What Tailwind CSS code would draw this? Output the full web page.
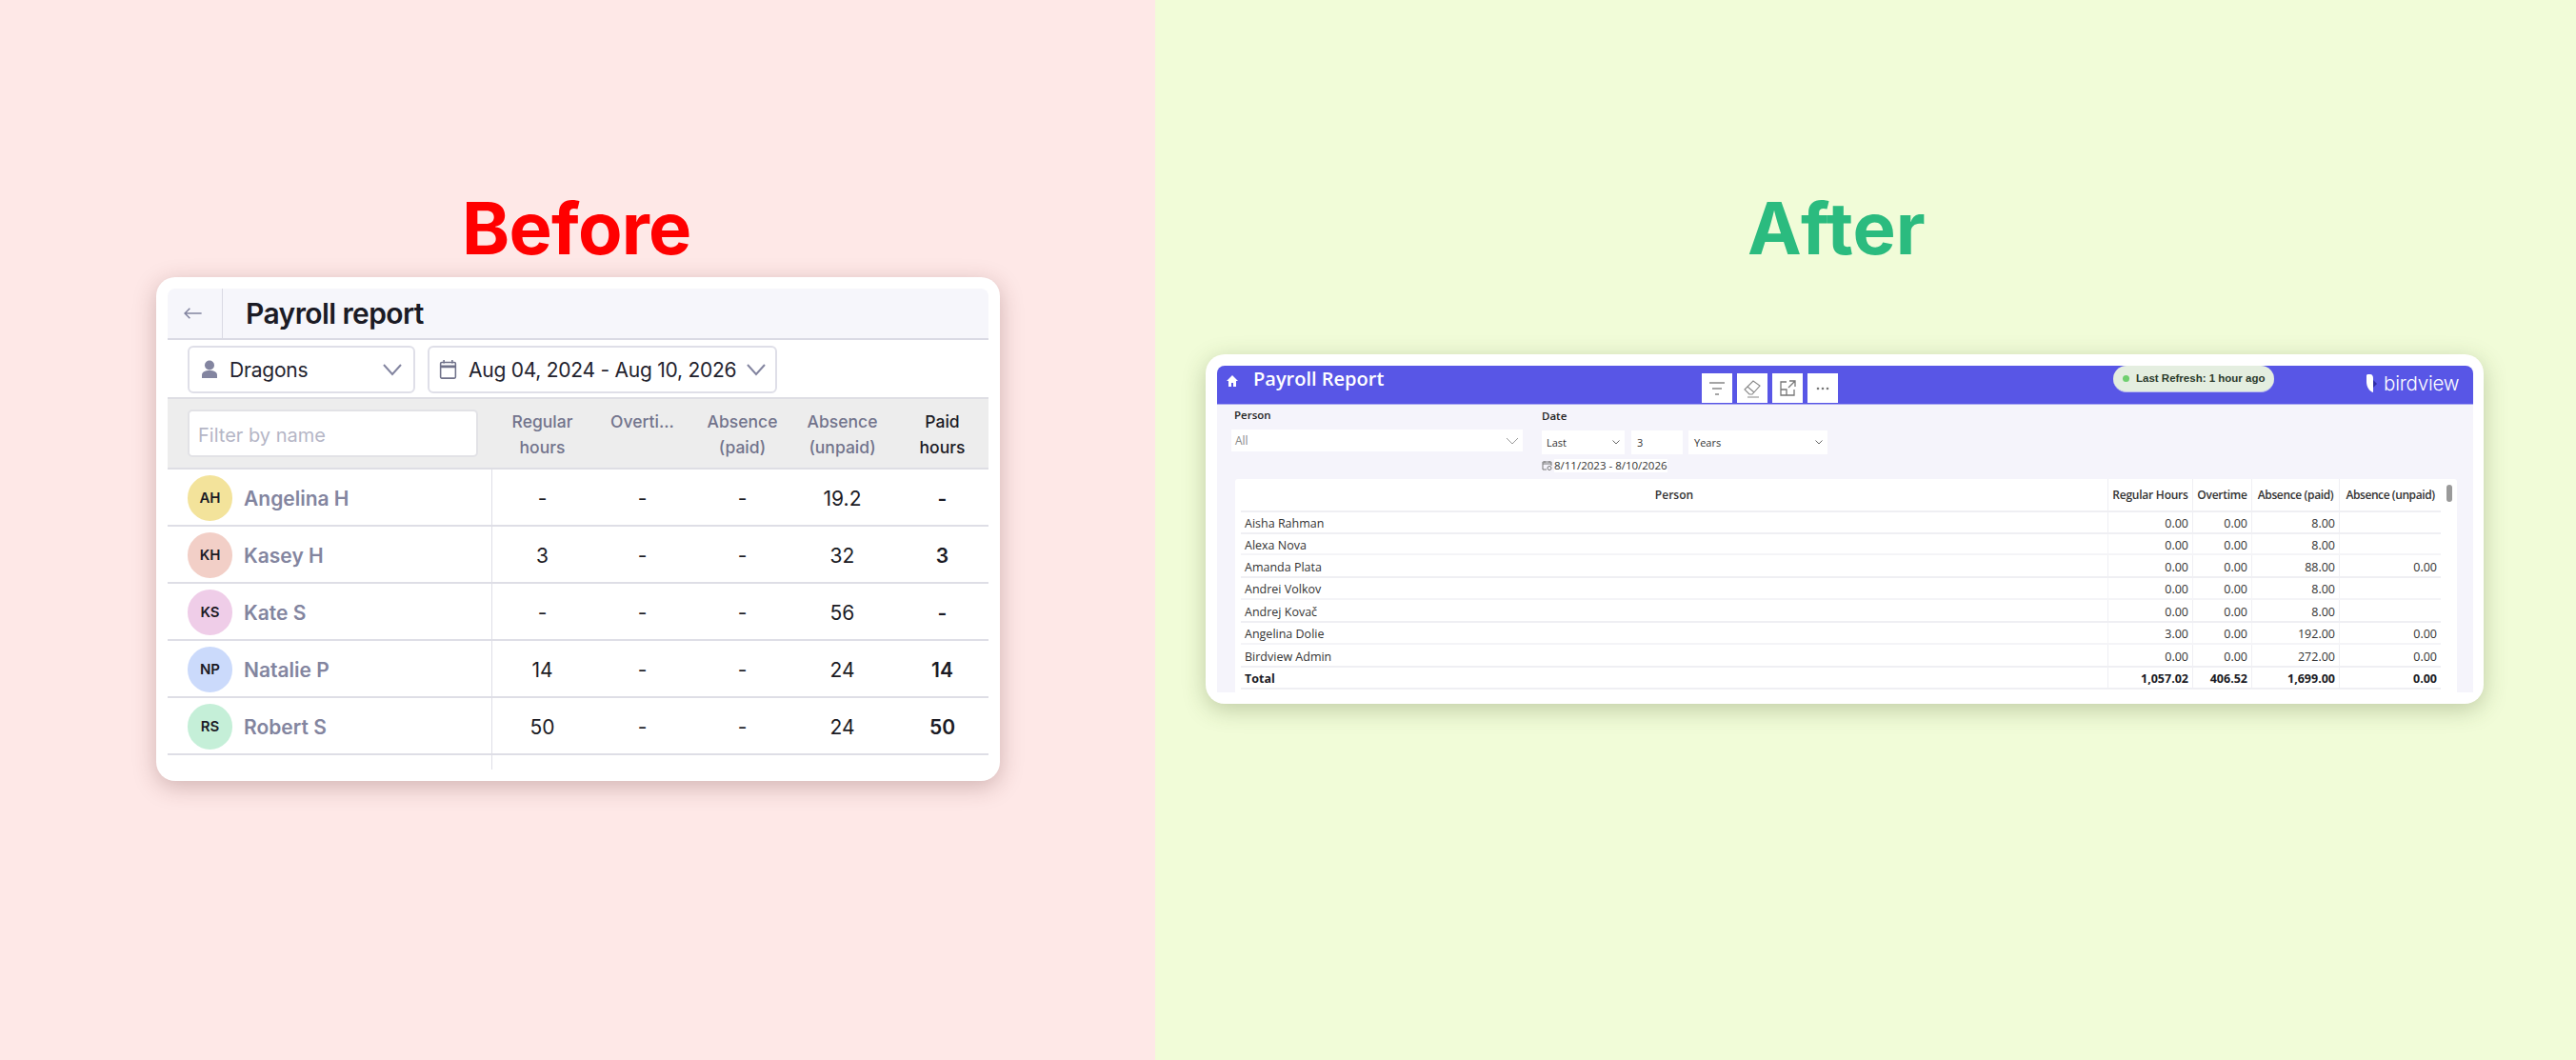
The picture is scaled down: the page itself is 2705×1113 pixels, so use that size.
<!DOCTYPE html>
<html><head><meta charset="utf-8"><script src="https://cdn.jsdelivr.net/npm/@tailwindcss/browser@4"></script></head>
<body class="m-0 overflow-hidden">
<div class="flex w-[2705px] h-[1113px] font-['Inter',sans-serif]">
  <!-- BEFORE -->
  <section class="w-[1213px] bg-[#FEE8E7] flex flex-col pt-[198px]">
    <h2 class="h-[83px] ml-[485px] text-[76px] leading-[83px] font-bold text-[#FF0000] tracking-[-0.01em]">Before</h2>
    <div class="ml-[164px] mt-[10px] w-[886px] h-[529px] bg-white rounded-[20px] shadow-[0_6px_24px_rgba(90,40,40,0.28)] px-[12px] pt-[12px] pb-[12px]">
      <div class="w-[862px] h-[505px] overflow-hidden rounded-t-[8px]">
        <div class="h-[54px] bg-[#F6F6FB] border-b-2 border-[#DADAE4] flex items-center">
          <div class="w-[58px] h-full border-r border-[#DADAE4] flex items-center justify-center pr-[6px]">
            <svg class="w-[22px] h-[14px]" viewBox="0 0 24 16" fill="none" stroke="#8385A0" stroke-width="1.8"><path d="M23 8H3M9 2 3 8l6 6"/></svg>
          </div>
          <div class="ml-[24px] text-[30px] font-semibold text-[#1B1B25] tracking-[-0.02em]">Payroll report</div>
        </div>
        <div class="h-[60px] flex items-center pl-[21px] gap-[13px] pt-[1px]">
          <div class="w-[239px] h-[50px] border-2 border-[#DFDFE8] rounded-[6px] flex items-center pl-[12px] pr-[12px]">
            <svg class="w-[18px] h-[19px]" viewBox="0 0 18 19" fill="#8385A0"><circle cx="9" cy="5.5" r="5"/><path d="M1 19v-3c0-3.500 3-5 8-5s8 1.500 8 5v3z"/></svg>
            <span class="ml-[12px] mt-[2px] text-[21px] text-[#23232E] tracking-[-0.01em]">Dragons</span>
            <svg class="w-[20px] h-[14px] ml-auto" viewBox="0 0 20 14" fill="none" stroke="#8385A0" stroke-width="2"><path d="m1 2 9 10 9-10"/></svg>
          </div>
          <div class="w-[367px] h-[50px] border-2 border-[#DFDFE8] rounded-[6px] flex items-center pl-[10px] pr-[10px]">
            <svg class="w-[19px] h-[21px]" viewBox="0 0 20 24" fill="none" stroke="#70728A" stroke-width="1.800"><rect x="1" y="4" width="18" height="19" rx="1.500"/><path d="M1 9h18" stroke-width="3"/><path d="M5 1v4M15 1v4"/></svg>
            <span class="ml-[12px] mt-[2px] text-[21px] text-[#23232E] tracking-[-0.012em] whitespace-nowrap">Aug 04, 2024 - Aug 10, 2026</span>
            <svg class="w-[20px] h-[14px] ml-auto" viewBox="0 0 20 14" fill="none" stroke="#8385A0" stroke-width="2"><path d="m1 2 9 10 9-10"/></svg>
          </div>
        </div>
        <div class="grid grid-cols-[341px_105px_105px_105px_105px_105px] h-[76px] bg-[#EDEDED] border-y-2 border-[#DEDEE4] text-[17.5px] leading-[27px] font-medium text-[#72748C] text-center">
          <div class="flex items-center pl-[21px]"><div class="w-[305px] h-[50px] bg-white border-2 border-[#E2E2E6] rounded-[5px] flex items-center pl-[9px] pt-[4px] text-[20px] font-normal text-[#B5B6C6]">Filter by name</div></div>
          <div class="pt-[10px]">Regular<br>hours</div>
          <div class="pt-[10px]">Overti...</div>
          <div class="pt-[10px]">Absence<br>(paid)</div>
          <div class="pt-[10px]">Absence<br>(unpaid)</div>
          <div class="pt-[10px] text-[#1B1B25]">Paid<br>hours</div>
        </div>
        <div class="grid grid-cols-[341px_105px_105px_105px_105px_105px] auto-rows-[60px] text-center text-[21px] text-[#1B1B25] items-center">
          <div class="h-[60px] border-b-2 border-r border-[#DEDEE6] flex items-center pl-[21px] pt-[2px] text-left"><span class="w-[47px] h-[48px] rounded-full bg-[#F3E39B] flex items-center justify-center text-[15px] font-semibold text-[#1B1B25] shrink-0">AH</span><span class="ml-[12px] mt-[1px] font-semibold text-[#83859F]">Angelina H</span></div>
          <div class="h-[60px] border-b-2 border-[#DEDEE6] leading-[62px]">-</div><div class="h-[60px] border-b-2 border-[#DEDEE6] leading-[62px]">-</div><div class="h-[60px] border-b-2 border-[#DEDEE6] leading-[62px]">-</div><div class="h-[60px] border-b-2 border-[#DEDEE6] leading-[62px]">19.2</div><div class="h-[60px] border-b-2 border-[#DEDEE6] leading-[62px] font-semibold">-</div>
          <div class="h-[60px] border-b-2 border-r border-[#DEDEE6] flex items-center pl-[21px] pt-[2px] text-left"><span class="w-[47px] h-[48px] rounded-full bg-[#F2CFC7] flex items-center justify-center text-[15px] font-semibold text-[#1B1B25] shrink-0">KH</span><span class="ml-[12px] mt-[1px] font-semibold text-[#83859F]">Kasey H</span></div>
          <div class="h-[60px] border-b-2 border-[#DEDEE6] leading-[62px]">3</div><div class="h-[60px] border-b-2 border-[#DEDEE6] leading-[62px]">-</div><div class="h-[60px] border-b-2 border-[#DEDEE6] leading-[62px]">-</div><div class="h-[60px] border-b-2 border-[#DEDEE6] leading-[62px]">32</div><div class="h-[60px] border-b-2 border-[#DEDEE6] leading-[62px] font-semibold">3</div>
          <div class="h-[60px] border-b-2 border-r border-[#DEDEE6] flex items-center pl-[21px] pt-[2px] text-left"><span class="w-[47px] h-[48px] rounded-full bg-[#EFCDE8] flex items-center justify-center text-[15px] font-semibold text-[#1B1B25] shrink-0">KS</span><span class="ml-[12px] mt-[1px] font-semibold text-[#83859F]">Kate S</span></div>
          <div class="h-[60px] border-b-2 border-[#DEDEE6] leading-[62px]">-</div><div class="h-[60px] border-b-2 border-[#DEDEE6] leading-[62px]">-</div><div class="h-[60px] border-b-2 border-[#DEDEE6] leading-[62px]">-</div><div class="h-[60px] border-b-2 border-[#DEDEE6] leading-[62px]">56</div><div class="h-[60px] border-b-2 border-[#DEDEE6] leading-[62px] font-semibold">-</div>
          <div class="h-[60px] border-b-2 border-r border-[#DEDEE6] flex items-center pl-[21px] pt-[2px] text-left"><span class="w-[47px] h-[48px] rounded-full bg-[#CBDAFB] flex items-center justify-center text-[15px] font-semibold text-[#1B1B25] shrink-0">NP</span><span class="ml-[12px] mt-[1px] font-semibold text-[#83859F]">Natalie P</span></div>
          <div class="h-[60px] border-b-2 border-[#DEDEE6] leading-[62px]">14</div><div class="h-[60px] border-b-2 border-[#DEDEE6] leading-[62px]">-</div><div class="h-[60px] border-b-2 border-[#DEDEE6] leading-[62px]">-</div><div class="h-[60px] border-b-2 border-[#DEDEE6] leading-[62px]">24</div><div class="h-[60px] border-b-2 border-[#DEDEE6] leading-[62px] font-semibold">14</div>
          <div class="h-[60px] border-b-2 border-r border-[#DEDEE6] flex items-center pl-[21px] pt-[2px] text-left"><span class="w-[47px] h-[48px] rounded-full bg-[#C5EFD8] flex items-center justify-center text-[15px] font-semibold text-[#1B1B25] shrink-0">RS</span><span class="ml-[12px] mt-[1px] font-semibold text-[#83859F]">Robert S</span></div>
          <div class="h-[60px] border-b-2 border-[#DEDEE6] leading-[62px]">50</div><div class="h-[60px] border-b-2 border-[#DEDEE6] leading-[62px]">-</div><div class="h-[60px] border-b-2 border-[#DEDEE6] leading-[62px]">-</div><div class="h-[60px] border-b-2 border-[#DEDEE6] leading-[62px]">24</div><div class="h-[60px] border-b-2 border-[#DEDEE6] leading-[62px] font-semibold">50</div>
          <div class="h-[16px] self-start border-r border-[#DEDEE6]"></div>
        </div>
      </div>
    </div>
  </section>

  <!-- AFTER -->
  <section class="w-[1492px] bg-[#F1FCD8] flex flex-col pt-[198px]">
    <h2 class="h-[83px] ml-[622px] text-[76px] leading-[83px] font-bold text-[#2BBB7F] tracking-[0em]">After</h2>
    <div class="ml-[53px] mt-[91px] w-[1342px] h-[367px] bg-white rounded-[20px] shadow-[0_6px_24px_rgba(60,80,30,0.28)] pl-[12px] pr-[11px] pt-[12px] font-['Open_Sans',sans-serif]">
      <div class="relative w-[1319px] h-[343px] bg-[#F5F4FB] rounded-t-[8px] overflow-hidden">
        <header class="relative h-[41px] bg-[#5856E6] border-b border-[#A9A8F0] flex items-start">
          <svg class="w-[14px] h-[14px] ml-[9px] mt-[9px]" viewBox="0 0 14 14" fill="#fff"><path d="M7 1 1 7h2v6h3V9h2v4h3V7h2z"/></svg>
          <div class="ml-[15px] text-[20px] leading-[28px] font-semibold text-white">Payroll Report</div>
          <div class="absolute left-[509px] top-[8px] flex gap-[5px]">
            <div class="w-[32px] h-[31px] bg-white flex items-center justify-center"><svg class="w-[20px] h-[18px]" viewBox="0 0 20 18" fill="none" stroke="#888" stroke-width="1.300"><path d="M2 3h16M5 9h10M8 15h4"/></svg></div>
            <div class="w-[32px] h-[31px] bg-white flex items-center justify-center"><svg class="w-[22px] h-[20px]" viewBox="0 0 22 20" fill="none" stroke="#888" stroke-width="1.100"><path d="m3 11 9-9 7 5-8 9H8zM6 8l7 6M6 19h12"/></svg></div>
            <div class="w-[32px] h-[31px] bg-white flex items-center justify-center"><svg class="w-[20px] h-[20px]" viewBox="0 0 20 20" fill="none" stroke="#777" stroke-width="1.300"><path d="M9 3H3v14h14v-6M3 11h6v6M12 2h6v6M18 2l-7 7"/></svg></div>
            <div class="w-[32px] h-[31px] bg-white flex items-center justify-center"><svg class="w-[14px] h-[4px]" viewBox="0 0 14 4" fill="#777"><circle cx="2" cy="2" r="1.300"/><circle cx="7" cy="2" r="1.300"/><circle cx="12" cy="2" r="1.300"/></svg></div>
          </div>
          <div class="absolute left-[941px] top-0 w-[169px] h-[28px] rounded-full bg-[#E4EEE0] border-b border-[#B9B9F0] flex items-center pl-[10px] text-[11.500px] font-bold text-[#2B3A2B] font-['Liberation_Sans',sans-serif] whitespace-nowrap">
            <span class="w-[7px] h-[7px] rounded-full bg-[#6FCF6F] mr-[7px]"></span>Last Refresh: 1 hour ago
          </div>
          <div class="absolute left-[1206px] top-[8px] flex items-center">
            <svg class="w-[14px] h-[22px]" viewBox="0 0 14 22"><path d="M2 1h3c2 0 3 2 3 4v15C4 19 1 14 1 9V2z" fill="#fff"/><path d="m8 7 4 4-4 4z" fill="#2F2DA8"/></svg>
            <span class="ml-[5px] text-[20.5px] leading-[22px] font-light tracking-[-0.01em] text-white font-['Inter',sans-serif]">birdview</span>
          </div>
        </header>
        <div class="relative h-[78px] text-[#333]">
          <div class="absolute left-[18px] top-[3px] text-[11.500px] leading-[16px] font-semibold text-[#222]">Person</div>
          <div class="absolute left-[15px] top-[26px] w-[306px] h-[23px] bg-white flex items-center pl-[4px] text-[12px] text-[#888]">All
            <svg class="w-[14px] h-[8px] absolute right-[4px] top-[8px]" viewBox="0 0 14 8" fill="none" stroke="#999" stroke-width="1"><path d="m1 1 6 6 6-6"/></svg>
          </div>
          <div class="absolute left-[341px] top-[4px] text-[11.500px] leading-[16px] font-semibold text-[#222]">Date</div>
          <div class="absolute left-[341px] top-[27px] w-[87px] h-[25px] bg-white flex items-center pl-[5px] pt-[1px] text-[11px] text-[#333]">Last
            <svg class="w-[8px] h-[5px] absolute right-[5px] top-[10px]" viewBox="0 0 8 5" fill="none" stroke="#666" stroke-width="1"><path d="m.5.5 3.500 3.500L7.500.5"/></svg>
          </div>
          <div class="absolute left-[435px] top-[27px] w-[54px] h-[25px] bg-white flex items-center pl-[6px] pt-[1px] text-[11px] text-[#333]">3</div>
          <div class="absolute left-[495px] top-[27px] w-[146px] h-[25px] bg-white flex items-center pl-[6px] pt-[1px] text-[11px] text-[#333]">Years
            <svg class="w-[8px] h-[5px] absolute right-[5px] top-[10px]" viewBox="0 0 8 5" fill="none" stroke="#666" stroke-width="1"><path d="m.5.5 3.500 3.500L7.500.5"/></svg>
          </div>
          <svg class="w-[11px] h-[11px] absolute left-[341px] top-[58px]" viewBox="0 0 11 11" fill="none" stroke="#777" stroke-width="1"><path d="M5 10H1V2h9v4M1 4h9M3 1v2M8 1v2"/><circle cx="8" cy="8.500" r="2"/></svg>
          <div class="absolute left-[354px] top-[57px] bg-white text-[11.500px] leading-[14px] whitespace-nowrap text-[#333]">8/11/2023 - 8/10/2026</div>
        </div>
        <div class="absolute left-[19px] top-[119px] w-[1283px] h-[224px] bg-white rounded-t-[3px] pl-[6px] text-[12.500px] text-[#333]">
          <div class="absolute left-[1272px] top-[6px] w-[6px] h-[18px] rounded-full bg-[#9A9A9A]"></div>
          <div class="w-[1260px] grid grid-cols-[911px_89px_62px_92px_106px] text-right">
            <div class="h-[35px] leading-[33px] text-center text-[12px] font-semibold border-b-2 border-r border-[#EFEFF3] text-[#333]">Person</div>
            <div class="h-[35px] leading-[33px] text-center text-[12px] font-semibold border-b-2 border-r border-[#EFEFF3] whitespace-nowrap tracking-[-0.02em]">Regular Hours</div>
            <div class="h-[35px] leading-[33px] text-center text-[12px] font-semibold border-b-2 border-r border-[#EFEFF3] whitespace-nowrap tracking-[-0.02em]">Overtime</div>
            <div class="h-[35px] leading-[33px] text-center text-[12px] font-semibold border-b-2 border-r border-[#EFEFF3] whitespace-nowrap tracking-[-0.03em]">Absence (paid)</div>
            <div class="h-[35px] leading-[33px] text-center text-[12px] font-semibold border-b-2 border-[#EFEFF3] whitespace-nowrap tracking-[-0.035em]">Absence (unpaid)</div>

            <div class="h-[23px] leading-[24px] pl-[4px] text-left border-b-2 border-r border-[#EFEFF3]">Aisha Rahman</div><div class="h-[23px] leading-[24px] pr-[4px] border-b-2 border-r border-[#EFEFF3]">0.00</div><div class="h-[23px] leading-[24px] pr-[4px] border-b-2 border-r border-[#EFEFF3]">0.00</div><div class="h-[23px] leading-[24px] pr-[4px] border-b-2 border-r border-[#EFEFF3]">8.00</div><div class="h-[23px] leading-[24px] pr-[4px] border-b-2 border-[#EFEFF3]"></div>
            <div class="h-[22px] leading-[23px] pl-[4px] text-left border-b-2 border-r border-[#F4F4F7]">Alexa Nova</div><div class="h-[22px] leading-[23px] pr-[4px] border-b-2 border-r border-[#F4F4F7]">0.00</div><div class="h-[22px] leading-[23px] pr-[4px] border-b-2 border-r border-[#F4F4F7]">0.00</div><div class="h-[22px] leading-[23px] pr-[4px] border-b-2 border-r border-[#F4F4F7]">8.00</div><div class="h-[22px] leading-[23px] pr-[4px] border-b-2 border-[#F4F4F7]"></div>
            <div class="h-[24px] leading-[25px] pl-[4px] text-left border-b-2 border-r border-[#EFEFF3]">Amanda Plata</div><div class="h-[24px] leading-[25px] pr-[4px] border-b-2 border-r border-[#EFEFF3]">0.00</div><div class="h-[24px] leading-[25px] pr-[4px] border-b-2 border-r border-[#EFEFF3]">0.00</div><div class="h-[24px] leading-[25px] pr-[4px] border-b-2 border-r border-[#EFEFF3]">88.00</div><div class="h-[24px] leading-[25px] pr-[4px] border-b-2 border-[#EFEFF3]">0.00</div>
            <div class="h-[23px] leading-[24px] pl-[4px] text-left border-b-2 border-r border-[#F4F4F7]">Andrei Volkov</div><div class="h-[23px] leading-[24px] pr-[4px] border-b-2 border-r border-[#F4F4F7]">0.00</div><div class="h-[23px] leading-[24px] pr-[4px] border-b-2 border-r border-[#F4F4F7]">0.00</div><div class="h-[23px] leading-[24px] pr-[4px] border-b-2 border-r border-[#F4F4F7]">8.00</div><div class="h-[23px] leading-[24px] pr-[4px] border-b-2 border-[#F4F4F7]"></div>
            <div class="h-[24px] leading-[25px] pl-[4px] text-left border-b-2 border-r border-[#EFEFF3]">Andrej Kovač</div><div class="h-[24px] leading-[25px] pr-[4px] border-b-2 border-r border-[#EFEFF3]">0.00</div><div class="h-[24px] leading-[25px] pr-[4px] border-b-2 border-r border-[#EFEFF3]">0.00</div><div class="h-[24px] leading-[25px] pr-[4px] border-b-2 border-r border-[#EFEFF3]">8.00</div><div class="h-[24px] leading-[25px] pr-[4px] border-b-2 border-[#EFEFF3]"></div>
            <div class="h-[23px] leading-[24px] pl-[4px] text-left border-b-2 border-r border-[#F4F4F7]">Angelina Dolie</div><div class="h-[23px] leading-[24px] pr-[4px] border-b-2 border-r border-[#F4F4F7]">3.00</div><div class="h-[23px] leading-[24px] pr-[4px] border-b-2 border-r border-[#F4F4F7]">0.00</div><div class="h-[23px] leading-[24px] pr-[4px] border-b-2 border-r border-[#F4F4F7]">192.00</div><div class="h-[23px] leading-[24px] pr-[4px] border-b-2 border-[#F4F4F7]">0.00</div>
            <div class="h-[24px] leading-[25px] pl-[4px] text-left border-b-2 border-r border-[#EFEFF3]">Birdview Admin</div><div class="h-[24px] leading-[25px] pr-[4px] border-b-2 border-r border-[#EFEFF3]">0.00</div><div class="h-[24px] leading-[25px] pr-[4px] border-b-2 border-r border-[#EFEFF3]">0.00</div><div class="h-[24px] leading-[25px] pr-[4px] border-b-2 border-r border-[#EFEFF3]">272.00</div><div class="h-[24px] leading-[25px] pr-[4px] border-b-2 border-[#EFEFF3]">0.00</div>
            <div class="h-[23px] leading-[24px] pl-[4px] text-left border-b-2 border-r border-[#EFEFF3] font-bold text-[#1B1B25]">Total</div><div class="h-[23px] leading-[24px] pr-[4px] border-b-2 border-r border-[#EFEFF3] font-bold text-[#1B1B25]">1,057.02</div><div class="h-[23px] leading-[24px] pr-[4px] border-b-2 border-r border-[#EFEFF3] font-bold text-[#1B1B25]">406.52</div><div class="h-[23px] leading-[24px] pr-[4px] border-b-2 border-r border-[#EFEFF3] font-bold text-[#1B1B25]">1,699.00</div><div class="h-[23px] leading-[24px] pr-[4px] border-b-2 border-[#EFEFF3] font-bold text-[#1B1B25]">0.00</div>
          </div>
        </div>
      </div>
    </div>
  </section>
</div>
</body></html>
